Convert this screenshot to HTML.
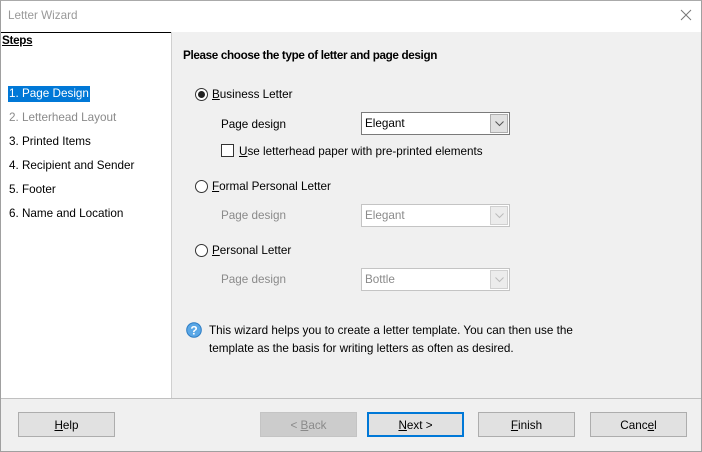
<!DOCTYPE html>
<html><head><style>
*{margin:0;padding:0;box-sizing:border-box}
body{width:702px;height:452px;position:relative;background:#f0f0f0;font-family:"Liberation Sans",sans-serif;font-size:11.7px;color:#000;overflow:hidden}
.a{position:absolute;white-space:nowrap}
.win{left:0;top:0;width:702px;height:452px;border:1px solid #a0a0a0;border-top-color:#aaa}
.title{left:1px;top:1px;width:700px;height:31px;background:#fff}
.left{left:1px;top:32px;width:170px;height:367px;background:#fff}
.u{text-decoration:underline}
.dis{color:#8a8a8a}
.combo{position:absolute;width:149px;height:23px;border:1px solid #7a7a7a;background:#fff;padding:4px 0 0 3px}
.combo.d{border-color:#c4c4c4;color:#8a8a8a}
.combo i{position:absolute;right:1px;top:1px;width:18px;height:19px;background:#e1e1e1;border:1px solid #adadad}
.combo.d i{background:#ececec;border-color:#d0d0d0}
.combo i svg{position:absolute;left:4px;top:6px}
.radio{position:absolute;width:13px;height:13px;border:1px solid #333;border-radius:50%;background:#fff}
.btn{position:absolute;top:412px;width:97px;height:25px;border:1px solid #adadad;background:#e1e1e1;text-align:center;padding-top:6px}
</style></head><body>
<div class="a win"></div>
<div class="a title"></div>
<div class="a" style="left:8px;top:9px;color:#999;">Letter Wizard</div>
<svg class="a" style="left:680px;top:9px" width="12" height="12"><path d="M1 1L11 11M11 1L1 11" stroke="#777" stroke-width="1"/></svg>
<div class="a left"></div>
<div class="a" style="left:1px;top:32px;width:171px;height:1px;background:#000"></div>
<div class="a" style="left:171px;top:32px;width:1px;height:366px;background:#d0d0d0"></div>
<div class="a" style="left:1px;top:398px;width:700px;height:1px;background:#c0c0c0"></div>
<div class="a u" style="left:2px;top:34px;font-weight:bold;letter-spacing:-0.3px">Steps</div>
<div class="a" style="left:8px;top:86px;background:#0078d7;color:#fff;padding:1px 1px 2px 1px;">1. Page Design</div>
<div class="a dis" style="left:9px;top:111px">2. Letterhead Layout</div>
<div class="a" style="left:9px;top:135px">3. Printed Items</div>
<div class="a" style="left:9px;top:159px">4. Recipient and Sender</div>
<div class="a" style="left:9px;top:183px">5. Footer</div>
<div class="a" style="left:9px;top:207px">6. Name and Location</div>

<div class="a" style="left:183px;top:49px;font-weight:bold;letter-spacing:-0.35px">Please choose the type of letter and page design</div>

<div class="radio" style="left:195px;top:88px"><div style="position:absolute;left:2px;top:2px;width:7px;height:7px;border-radius:50%;background:#222"></div></div>
<div class="a" style="left:212px;top:88px"><span class="u">B</span>usiness Letter</div>
<div class="a" style="left:221px;top:118px">Page design</div>
<div class="combo" style="left:361px;top:112px">Elegant<i><svg width="9" height="6"><path d="M0.5 0.5L4.5 4.5L8.5 0.5" stroke="#555" fill="none"/></svg></i></div>
<div class="a" style="left:221px;top:144px;width:13px;height:13px;border:1px solid #333;background:#fff"></div>
<div class="a" style="left:239px;top:145px"><span class="u">U</span>se letterhead paper with pre-printed elements</div>

<div class="radio" style="left:195px;top:180px"></div>
<div class="a" style="left:212px;top:180px"><span class="u">F</span>ormal Personal Letter</div>
<div class="a dis" style="left:221px;top:209px">Page design</div>
<div class="combo d" style="left:361px;top:204px">Elegant<i><svg width="9" height="6"><path d="M0.5 0.5L4.5 4.5L8.5 0.5" stroke="#bbb" fill="none"/></svg></i></div>

<div class="radio" style="left:195px;top:244px"></div>
<div class="a" style="left:212px;top:244px"><span class="u">P</span>ersonal Letter</div>
<div class="a dis" style="left:221px;top:273px">Page design</div>
<div class="combo d" style="left:361px;top:268px">Bottle<i><svg width="9" height="6"><path d="M0.5 0.5L4.5 4.5L8.5 0.5" stroke="#bbb" fill="none"/></svg></i></div>

<svg class="a" style="left:186px;top:322px" width="16" height="16"><circle cx="8" cy="8" r="7.3" fill="#5aa7e6" stroke="#2c7cc4"/><text x="8" y="12.5" font-size="12" font-weight="bold" text-anchor="middle" fill="#fff" font-family="Liberation Sans">?</text></svg>
<div class="a" style="left:209px;top:322px;line-height:18px">This wizard helps you to create a letter template. You can then use the<br>template as the basis for writing letters as often as desired.</div>

<div class="btn" style="left:18px"><span class="u">H</span>elp</div>
<div class="btn" style="left:260px;border-color:#c4c4c4;background:#ccc;color:#8a8a8a">&lt; <span class="u">B</span>ack</div>
<div class="btn" style="left:367px;border:2px solid #0078d7;padding-top:5px"><span class="u">N</span>ext &gt;</div>
<div class="btn" style="left:478px"><span class="u">F</span>inish</div>
<div class="btn" style="left:590px">Canc<span class="u">e</span>l</div>
</body></html>
